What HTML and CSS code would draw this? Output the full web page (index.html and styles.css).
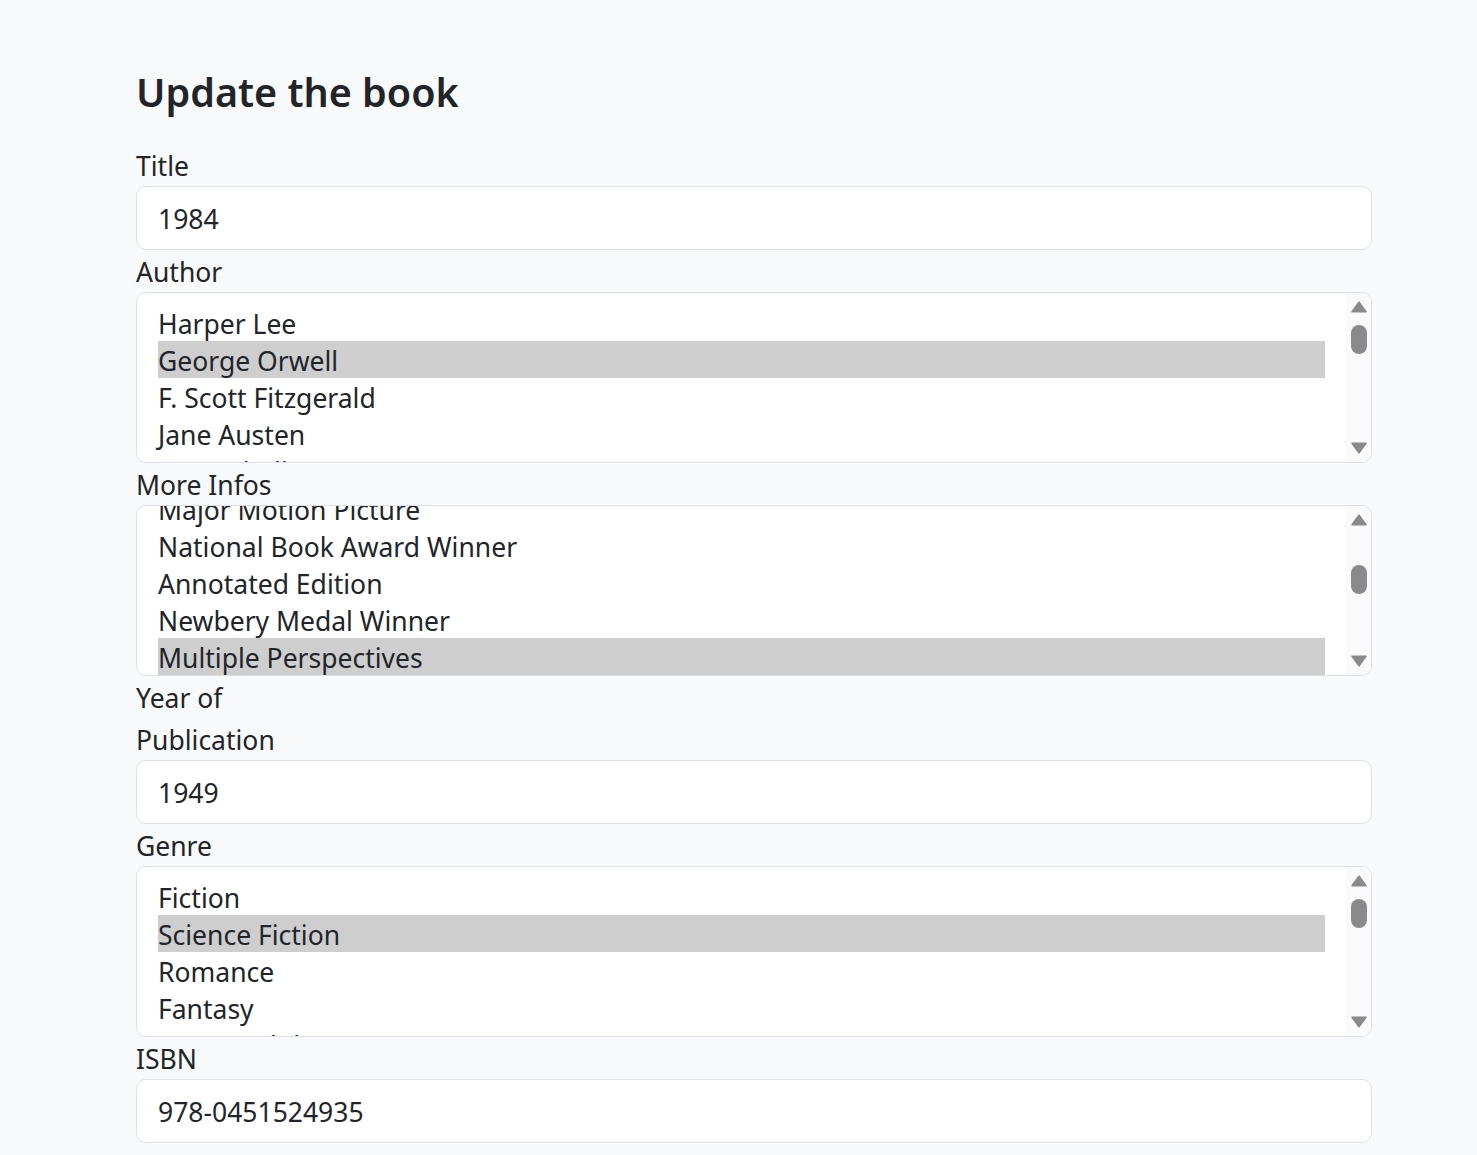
FILE: index.html
```html
<!DOCTYPE html>
<html lang="en">
<head>
<meta charset="utf-8">
<title>Update the book</title>
<link rel="stylesheet" href="styles.css">
</head>
<body>
<main class="page">
  <h2 class="heading">Update the book</h2>
  <form class="form">
    <div class="field">
      <label class="label" for="title">Title</label>
      <input class="input" id="title" type="text" value="1984">
    </div>
    <div class="field">
      <label class="label">Author</label>
      <div class="select">
        <div class="options">
          <div class="option">Harper Lee</div>
          <div class="option selected">George Orwell</div>
          <div class="option">F. Scott Fitzgerald</div>
          <div class="option">Jane Austen</div>
          <div class="option">Mary Shelley</div>
          <div class="option">Mark Twain</div>
        </div>
        <div class="scrollbar">
          <svg class="arrow" width="16" height="12" viewBox="0 0 16 12"><path d="M8 1.2 L15 10.8 H1 Z"/></svg>
          <div class="track"><div class="thumb" style="margin-top:12px"></div></div>
          <svg class="arrow" width="16" height="12" viewBox="0 0 16 12"><path d="M8 10.8 L15 1.2 H1 Z"/></svg>
        </div>
      </div>
    </div>
    <div class="field">
      <label class="label">More Infos</label>
      <div class="select">
        <div class="options scrolled">
          <div class="option">Major Motion Picture</div>
          <div class="option">National Book Award Winner</div>
          <div class="option">Annotated Edition</div>
          <div class="option">Newbery Medal Winner</div>
          <div class="option selected">Multiple Perspectives</div>
          <div class="option">Illustrated</div>
        </div>
        <div class="scrollbar">
          <svg class="arrow" width="16" height="12" viewBox="0 0 16 12"><path d="M8 1.2 L15 10.8 H1 Z"/></svg>
          <div class="track"><div class="thumb" style="margin-top:39px"></div></div>
          <svg class="arrow" width="16" height="12" viewBox="0 0 16 12"><path d="M8 10.8 L15 1.2 H1 Z"/></svg>
        </div>
      </div>
    </div>
    <div class="field">
      <label class="label" for="year">Year of Publication</label>
      <input class="input" id="year" type="text" value="1949">
    </div>
    <div class="field">
      <label class="label">Genre</label>
      <div class="select">
        <div class="options">
          <div class="option">Fiction</div>
          <div class="option selected">Science Fiction</div>
          <div class="option">Romance</div>
          <div class="option">Fantasy</div>
          <div class="option">Young Adult</div>
          <div class="option">Mystery</div>
        </div>
        <div class="scrollbar">
          <svg class="arrow" width="16" height="12" viewBox="0 0 16 12"><path d="M8 1.2 L15 10.8 H1 Z"/></svg>
          <div class="track"><div class="thumb" style="margin-top:12px"></div></div>
          <svg class="arrow" width="16" height="12" viewBox="0 0 16 12"><path d="M8 10.8 L15 1.2 H1 Z"/></svg>
        </div>
      </div>
    </div>
    <div class="field">
      <label class="label" for="isbn">ISBN</label>
      <input class="input" id="isbn" type="text" value="978-0451524935">
    </div>
  </form>
</main>
</body>
</html>
```
FILE: styles.css
```css
html, body {
  margin: 0;
  padding: 0;
}
body {
  background: #f8f9fa;
  color: #212529;
  font-family: "Noto Sans", "Open Sans", sans-serif;
  font-size: 26.5px;
  line-height: 1.5;
  overflow: hidden;
}
.page {
  width: 1236px;
  margin-left: 136px;
  padding-top: 68px;
}
.heading {
  margin: 0 0 28px;
  font-size: 39.5px;
  font-weight: 600;
  line-height: 48px;
  color: #212529;
}
.form {
  display: flex;
  flex-direction: column;
}
.field {
  display: flex;
  flex-direction: column;
}
.label {
  display: block;
  box-sizing: border-box;
  width: 200px;
  padding-top: 1px;
  margin-bottom: -1px;
  line-height: 42px;
}
.input {
  box-sizing: border-box;
  width: 100%;
  height: 64px;
  margin: 0;
  padding: 11px 21px 9px;
  border: 1px solid #dee2e6;
  border-radius: 10px;
  background: #fff;
  font: inherit;
  line-height: 42px;
  color: #212529;
  outline: none;
}
.select {
  box-sizing: border-box;
  display: flex;
  height: 171px;
  border: 1px solid #dee2e6;
  border-radius: 10px;
  background: #fff;
  overflow: hidden;
}
.options {
  flex: 1;
  padding: 10.5px 21px;
  overflow: hidden;
}
.options.scrolled {
  padding-top: 0;
}
.options.scrolled .option:first-child {
  margin-top: -16px;
}
.option {
  box-sizing: border-box;
  height: 37px;
  padding-top: 4px;
  line-height: 33px;
  white-space: nowrap;
}
.option.selected {
  background: #cecece;
}
.scrollbar {
  width: 25px;
  flex: none;
  background: #fafafa;
  display: flex;
  flex-direction: column;
  align-items: center;
  padding: 8px 0;
}
.arrow {
  display: block;
  flex: none;
}
.arrow path {
  fill: #8a8a8a;
  stroke: #8a8a8a;
  stroke-width: 1.6;
  stroke-linejoin: round;
}
.track {
  flex: 1;
  display: flex;
  flex-direction: column;
}
.thumb {
  width: 16px;
  height: 29px;
  border-radius: 8px;
  background: #8a8a8a;
}
```
